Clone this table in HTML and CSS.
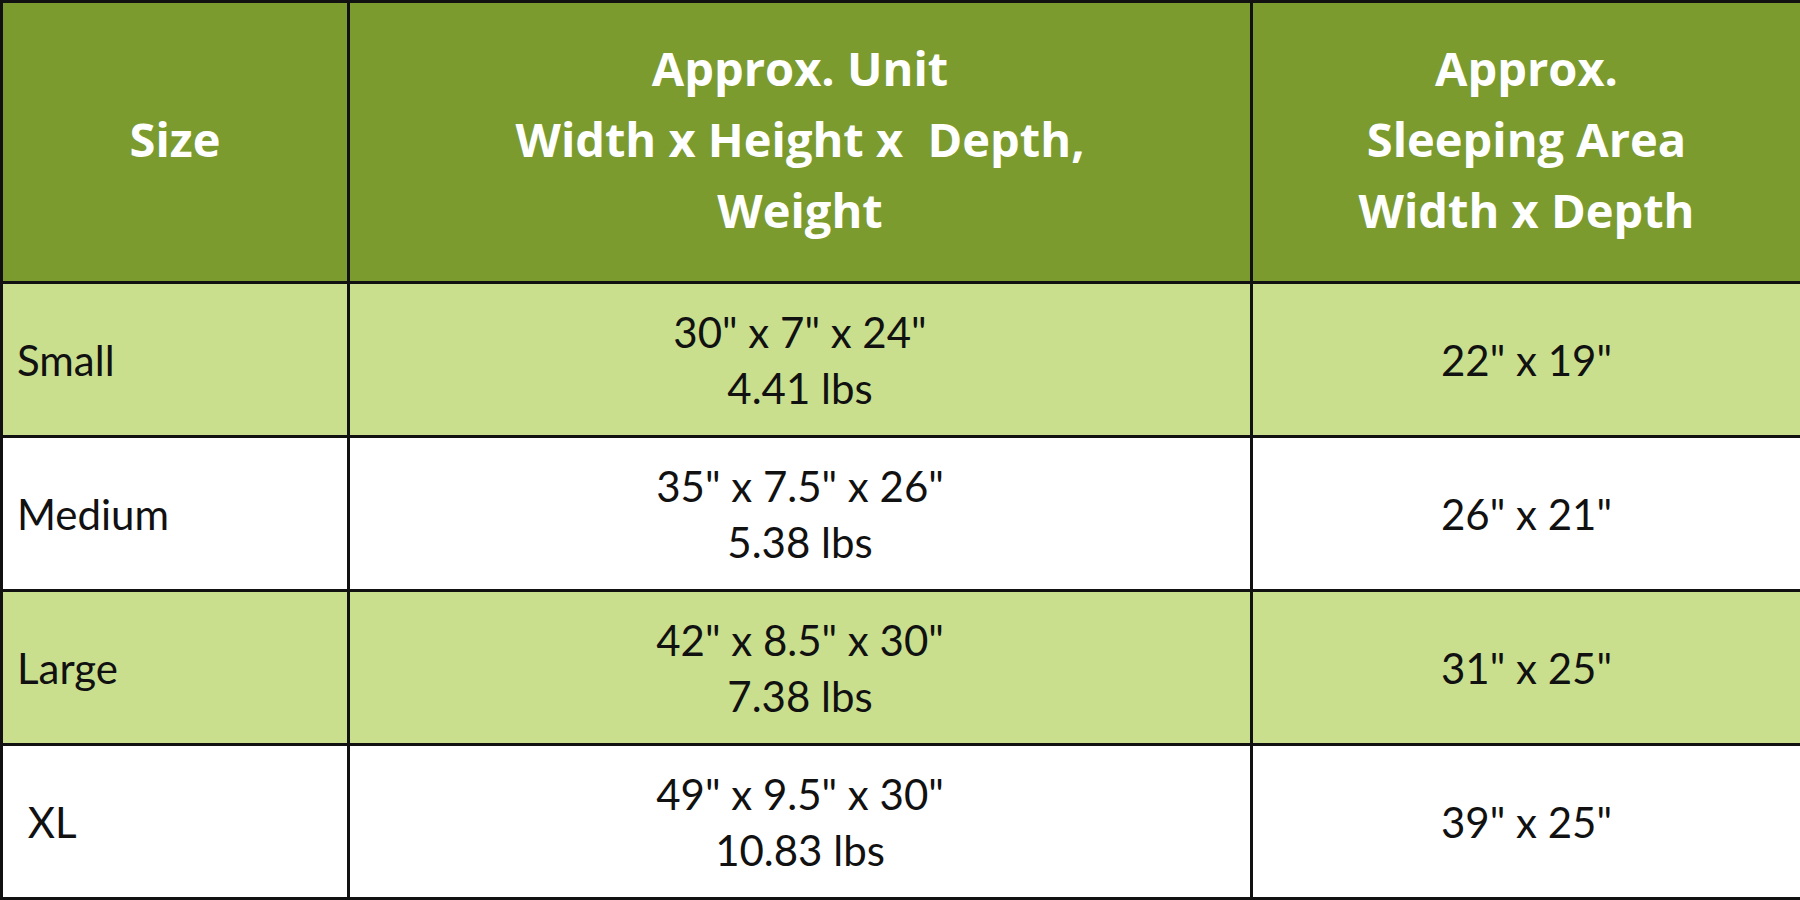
FILE: index.html
```
<!DOCTYPE html>
<html>
<head>
<meta charset="utf-8">
<link rel="stylesheet" href="styles.css">
</head>
<body>
<table class="sizes">
  <colgroup>
    <col class="c1">
    <col class="c2">
    <col class="c3">
  </colgroup>
  <thead>
    <tr class="head">
      <th>Size</th>
      <th>Approx. Unit<br>Width x Height x&nbsp; Depth,<br>Weight</th>
      <th>Approx.<br>Sleeping Area<br>Width x Depth</th>
    </tr>
  </thead>
  <tbody>
    <tr class="alt">
      <td class="name">Small</td>
      <td class="mid">30" x 7" x 24"<br>4.41 lbs</td>
      <td class="mid">22" x 19"</td>
    </tr>
    <tr>
      <td class="name">Medium</td>
      <td class="mid">35" x 7.5" x 26"<br>5.38 lbs</td>
      <td class="mid">26" x 21"</td>
    </tr>
    <tr class="alt">
      <td class="name">Large</td>
      <td class="mid">42" x 8.5" x 30"<br>7.38 lbs</td>
      <td class="mid">31" x 25"</td>
    </tr>
    <tr>
      <td class="name">&nbsp;XL</td>
      <td class="mid">49" x 9.5" x 30"<br>10.83 lbs</td>
      <td class="mid">39" x 25"</td>
    </tr>
  </tbody>
</table>
</body>
</html>
```
FILE: styles.css
```
html, body {
  margin: 0;
  padding: 0;
  background: #ffffff;
}
.sizes {
  width: 1800px;
  border-collapse: collapse;
  table-layout: fixed;
  font-family: Lato, "Liberation Sans", sans-serif;
  color: #111111;
}
.c1 { width: 347px; }
.c2 { width: 903px; }
.c3 { width: 550px; }
.sizes th, .sizes td {
  border: 3px solid #111111;
  padding: 0;
}
.head { height: 281px; }
.head th {
  background: #7b9b2e;
  color: #ffffff;
  font-family: "Open Sans", "Noto Sans", sans-serif;
  font-weight: 700;
  font-size: 47px;
  line-height: 71px;
  text-align: center;
  vertical-align: middle;
  padding-bottom: 6px;
}
.sizes tbody tr { height: 154px; }
.sizes tbody tr.alt { background: #c9df8e; }
.name {
  font-size: 42px;
  line-height: 56px;
  text-align: left;
  padding-left: 14px !important;
}
.mid {
  font-size: 42px;
  line-height: 56px;
  text-align: center;
}
```
